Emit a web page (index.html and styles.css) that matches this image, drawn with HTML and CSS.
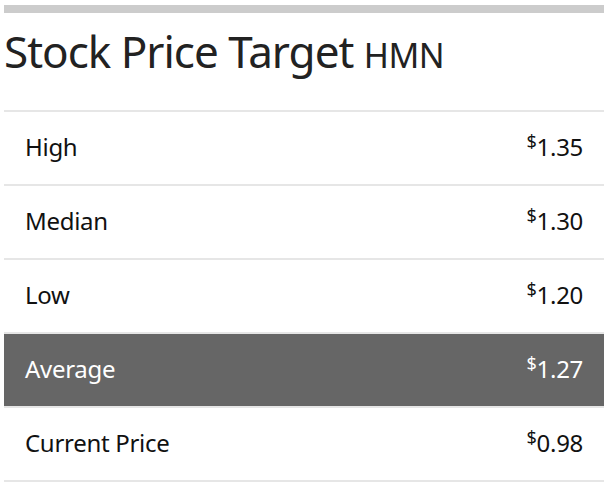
FILE: index.html
```html
<!DOCTYPE html>
<html>
<head>
<meta charset="utf-8">
<link rel="stylesheet" href="styles.css">
</head>
<body>
<div class="widget">
  <div class="top-bar"></div>
  <h1 class="title">Stock Price Target <span class="ticker">HMN</span></h1>
  <div class="rows">
    <div class="row"><span class="label">High</span><span class="value"><sup>$</sup>1.35</span></div>
    <div class="row"><span class="label">Median</span><span class="value"><sup>$</sup>1.30</span></div>
    <div class="row"><span class="label">Low</span><span class="value"><sup>$</sup>1.20</span></div>
    <div class="row row-dark"><span class="label">Average</span><span class="value"><sup>$</sup>1.27</span></div>
    <div class="row"><span class="label">Current Price</span><span class="value"><sup>$</sup>0.98</span></div>
  </div>
</div>
</body>
</html>
```

FILE: styles.css
```css
html, body {
  margin: 0;
  padding: 0;
  background: #fff;
}
body {
  font-family: "Noto Sans", "Open Sans", sans-serif;
  color: #111;
}
.widget {
  width: 600px;
  margin: 5px 0 0 4px;
}
.top-bar {
  height: 8px;
  background: #cccccc;
}
.title {
  margin: 0;
  height: 97px;
  box-sizing: border-box;
  padding-top: 9px;
  font-size: 44px;
  font-weight: 400;
  line-height: 58px;
  color: #222;
  letter-spacing: -1px;
}
.ticker {
  font-size: 34px;
  letter-spacing: -0.5px;
}
.rows {
  border-bottom: 2px solid #e6e6e6;
}
.row {
  display: flex;
  justify-content: space-between;
  align-items: center;
  height: 68px;
  border-top: 2px solid #e6e6e6;
  padding: 0 21px 4px;
  font-size: 24px;
  letter-spacing: -0.3px;
  color: #111;
}
.row-dark {
  background: #666666;
  color: #fff;
}
.value sup {
  font-size: 18px;
  vertical-align: 8px;
  line-height: 0;
}
```
